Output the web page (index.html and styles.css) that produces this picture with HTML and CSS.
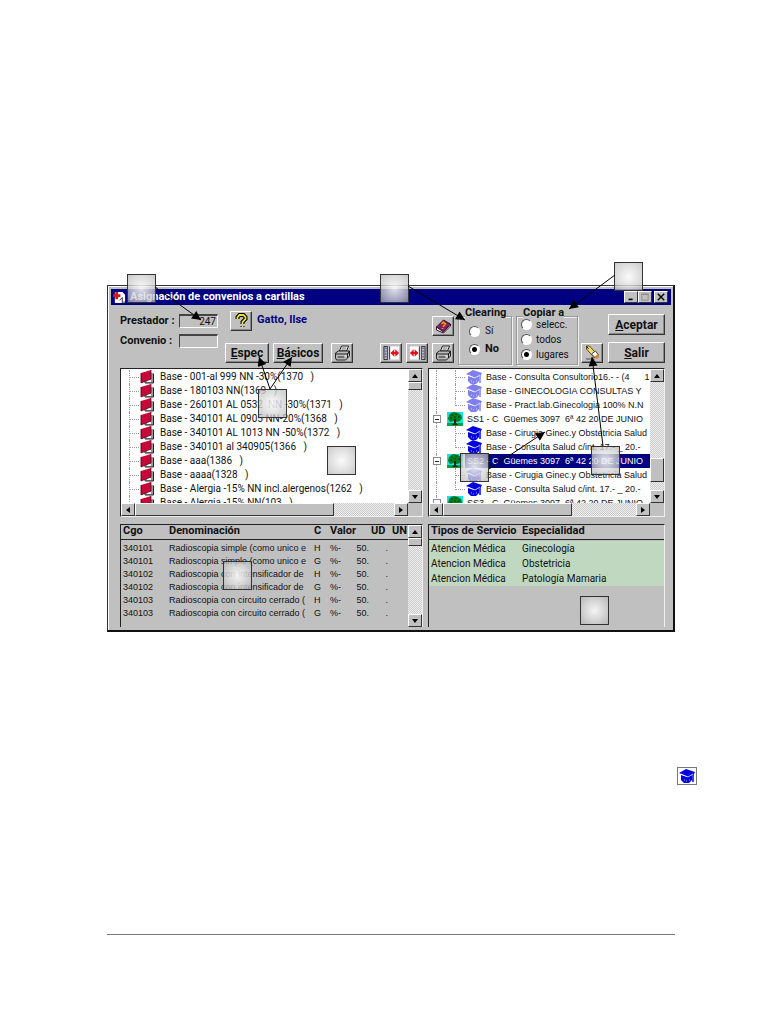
FILE: index.html
```html
<!DOCTYPE html>
<html lang="es">
<head>
<meta charset="utf-8">
<title>Asignación de convenios a cartillas</title>
<link rel="stylesheet" href="styles.css">
</head>
<body>
<svg class="defs" width="0" height="0" aria-hidden="true">
  <symbol id="book" viewBox="0 0 16 14">
    <path d="M5 3h10v10H5z" fill="#999"/><path d="M8 10h4v2H8z" fill="#fff"/><path d="M14.500 4v9H6" fill="none" stroke="#222"/>
    <path d="M2 3L12 0v9L2 13z" fill="#c80838"/><path d="M12 0v9L2 13" fill="none" stroke="#500018" stroke-width=".7"/><path d="M1 4h2M1 6h2M1 8h2M1 10h2M1 12h2" stroke="#300010" stroke-width=".8"/>
  </symbol>
  <symbol id="cap" viewBox="0 0 16 14">
    <path d="M0 4L7 0l9 3-1 2-6 3z"/><path d="M2 6l6 2 5-2v5l-3 3H5l-3-3z"/><path d="M14 4v9" stroke="currentColor" stroke-width="1.5"/><path d="M2 5l7 3 5-3M5 11h1M7 12h1M10 11h1" stroke="#fff" stroke-width=".7" fill="none"/>
  </symbol>
  <symbol id="tree" viewBox="0 0 16 14">
    <path d="M0 0h16v14H0z" fill="#18e0e8"/><path d="M0 11h16v3H0z" fill="#00a040"/>
    <path d="M2 3l2-2 3-1 4 1 3 2 1 3-2 3-3 1-3-1-4 1-2-3z" fill="#008020"/><path d="M4 3h2M8 2h2M11 5h2M3 6h2M7 5h2" stroke="#003c10"/>
    <path d="M7 7h2v4l2 2H5l2-2z" fill="#402000"/>
  </symbol>
  <symbol id="printer" viewBox="0 0 16 16">
    <path d="M5 6l2-5h7l-2 5z" fill="#fff" stroke="#222"/><path d="M7 3h5M7 5h4" stroke="#666"/>
    <path d="M1 8l3-2h11l-2 3v4l-2 2H2l-1-2z" fill="#bbb" stroke="#222"/><path d="M1 9h12l2-3v5l-2 2M3 12h7" fill="none" stroke="#222"/><path d="M10 11h2" stroke="#fff"/>
  </symbol>
  <symbol id="panel" viewBox="0 0 18 16">
    <path d="M1 1h16v14H1z" fill="#fff"/><path d="M1 1h4v14H1z" fill="#b8b8c8"/><path d="M1 1h4v14H1zM7 1v14" fill="none" stroke="#222"/><path d="M2 3h2M2 6h2M2 9h2M2 12h2" stroke="#3850a0"/>
    <path d="M8 8l4-4v8zM17 8l-4-4v8z" fill="#e01020"/><path d="M9 8h7" stroke="#e01020" stroke-width="2"/>
  </symbol>
  <symbol id="up" viewBox="0 0 8 8"><path d="M1 6l3-4 3 4z"/></symbol>
  <symbol id="down" viewBox="0 0 8 8"><path d="M1 2l3 4 3-4z"/></symbol>
  <symbol id="left" viewBox="0 0 8 8"><path d="M6 1L2 4l4 3z"/></symbol>
  <symbol id="right" viewBox="0 0 8 8"><path d="M2 1l4 3-4 3z"/></symbol>
</svg>

<main class="page">
<section class="window">
  <header class="titlebar">
    <svg class="appicon" viewBox="0 0 14 14"><path d="M2 1h8l3 3v9H2z" fill="#fff"/><path d="M4 1v8M0 5h8" stroke="#e01010" stroke-width="3"/><path d="M7 10l3-3v6M11 12h2" stroke="#222" fill="none"/></svg>
    <h1>Asignación de convenios a cartillas</h1>
    <button class="sys" aria-label="Minimizar"><svg viewBox="0 0 10 10"><path d="M2 8h5" stroke="#000" stroke-width="2"/></svg></button>
    <button class="sys" aria-label="Maximizar" disabled><svg viewBox="0 0 10 10"><path d="M1 1h8v8H1zM1 2h8" stroke="#888" fill="none"/></svg></button>
    <button class="sys close" aria-label="Cerrar"><svg viewBox="0 0 10 10"><path d="M1 1l8 8M9 1L1 9" stroke="#000" stroke-width="1.800"/></svg></button>
  </header>

  <div class="toolbar">
    <div class="fields">
      <label for="prestador">Prestador :</label><input id="prestador" value="247">
      <label for="convenio">Convenio :</label><input id="convenio" value="">
    </div>
    <div class="tools">
      <div class="toolrow first">
        <button class="btn icon" aria-label="Ayuda"><svg viewBox="0 0 16 16"><path d="M4 6V4l2-2h4l2 2v2L9 9v2M9 13v1" fill="none" stroke="#000" stroke-width="4"/><path d="M4 6V4l2-2h4l2 2v2L9 9v2M9 13v1" fill="none" stroke="#e8e030" stroke-width="1.800"/></svg></button>
        <span class="name">Gatto, Ilse</span>
        <button class="btn icon manual" aria-label="Manual"><svg viewBox="0 0 16 16"><path d="M1 9l7-7 7 4-7 8z" fill="#802060" stroke="#301030"/><path d="M1 9v3l7 3 7-7V6l-7 8z" fill="#fff" stroke="#301030"/><path d="M6 6l2-2 2 2-2 2v1M7 10v1" fill="none" stroke="#ff9800" stroke-width="1.500"/></svg></button>
      </div>
      <div class="toolrow">
        <button class="btn espec"><span><u>E</u>spec</span></button>
        <button class="btn basicos"><span><u>B</u>ásicos</span></button>
        <button class="btn icon print" aria-label="Imprimir convenios"><svg viewBox="0 0 16 16"><use href="#printer"/></svg></button>
        <span class="grow"></span>
        <button class="btn icon" aria-label="Panel izquierdo"><svg viewBox="0 0 18 16"><use href="#panel"/></svg></button>
        <button class="btn icon" aria-label="Panel derecho"><svg class="flip" viewBox="0 0 18 16"><use href="#panel"/></svg></button>
        <button class="btn icon" aria-label="Imprimir cartilla"><svg viewBox="0 0 16 16"><use href="#printer"/></svg></button>
      </div>
    </div>
    <fieldset class="group clearing">
      <legend>Clearing</legend>
      <label><input type="radio" name="clearing">Sí</label>
      <label class="strong"><input type="radio" name="clearing" checked>No</label>
    </fieldset>
    <fieldset class="group copiar">
      <legend>Copiar a</legend>
      <label><input type="radio" name="copiar">selecc.</label>
      <label><input type="radio" name="copiar">todos</label>
      <label><input type="radio" name="copiar" checked>lugares</label>
    </fieldset>
    <button class="btn icon edit" aria-label="Editar"><svg viewBox="0 0 16 16"><path d="M1 13h9v2H2z" fill="#888"/><path d="M2 1l3 0 8 9-3 3-8-9z" fill="#f0e070" stroke="#604810"/><path d="M7 9l4-3 3 4-3 3z" fill="#fff" stroke="#444"/><path d="M10 12l3-3 2 3-3 2z" fill="#e08030"/><path d="M2 1l2 3" stroke="#222"/></svg></button>
    <div class="actions">
      <button class="btn"><span><u>A</u>ceptar</span></button>
      <button class="btn"><span><u>S</u>alir</span></button>
    </div>
  </div>

  <div class="panes">
    <div class="pane">
      <div class="paneview">
        <ul class="tree flat">
          <li><svg class="ico"><use href="#book"/></svg>Base - 001-al 999 NN -30%(1370 &nbsp; )</li>
          <li><svg class="ico"><use href="#book"/></svg>Base - 180103 NN(1369 &nbsp; )</li>
          <li><svg class="ico"><use href="#book"/></svg>Base - 260101 AL 0532 &nbsp;NN -30%(1371 &nbsp; )</li>
          <li><svg class="ico"><use href="#book"/></svg>Base - 340101 AL 0905 NN-20%(1368 &nbsp; )</li>
          <li><svg class="ico"><use href="#book"/></svg>Base - 340101 AL 1013 NN -50%(1372 &nbsp; )</li>
          <li><svg class="ico"><use href="#book"/></svg>Base - 340101 al 340905(1366 &nbsp; )</li>
          <li><svg class="ico"><use href="#book"/></svg>Base - aaa(1386 &nbsp; )</li>
          <li><svg class="ico"><use href="#book"/></svg>Base - aaaa(1328 &nbsp; )</li>
          <li><svg class="ico"><use href="#book"/></svg>Base - Alergia -15% NN incl.alergenos(1262 &nbsp; )</li>
          <li><svg class="ico"><use href="#book"/></svg>Base - Alergia -15% NN(103 &nbsp; )</li>
        </ul>
        <div class="vscroll"><button class="arrow" aria-label="Subir"><svg><use href="#up"/></svg></button><span class="thumb small"></span><span class="grow"></span><button class="arrow" aria-label="Bajar"><svg><use href="#down"/></svg></button></div>
      </div>
      <div class="hscroll"><button class="arrow" aria-label="Izquierda"><svg><use href="#left"/></svg></button><span class="thumb wide"></span><span class="grow"></span><button class="arrow" aria-label="Derecha"><svg><use href="#right"/></svg></button><span class="corner"></span></div>
    </div>

    <div class="pane">
      <div class="paneview">
        <ul class="tree nested">
          <li class="child"><svg class="ico cap dim"><use href="#cap"/></svg>Base - Consulta Consultorio16.- - (4 &nbsp; &nbsp; &nbsp;1</li>
          <li class="child"><svg class="ico cap dim"><use href="#cap"/></svg>Base - GINECOLOGIA CONSULTAS Y</li>
          <li class="child last"><svg class="ico cap dim"><use href="#cap"/></svg>Base - Pract.lab.Ginecologia 100% N.N</li>
          <li class="node"><span class="toggle"></span><svg class="ico"><use href="#tree"/></svg><span class="label">SS1 - C &nbsp;Güemes 3097 &nbsp;6ª 42 20 DE JUNIO</span></li>
          <li class="child"><svg class="ico cap"><use href="#cap"/></svg>Base - Cirugia Ginec.y Obstetricia Salud</li>
          <li class="child last"><svg class="ico cap"><use href="#cap"/></svg>Base - Consulta Salud c/int. 17.- _ 20.-</li>
          <li class="node"><span class="toggle"></span><svg class="ico"><use href="#tree"/></svg><span class="label selected">SS2 - C &nbsp;Güemes 3097 &nbsp;6ª 42 20 DE JUNIO</span></li>
          <li class="child"><svg class="ico cap"><use href="#cap"/></svg>Base - Cirugia Ginec.y Obstetricia Salud</li>
          <li class="child last"><svg class="ico cap"><use href="#cap"/></svg>Base - Consulta Salud c/int. 17.- _ 20.-</li>
          <li class="node"><span class="toggle"></span><svg class="ico"><use href="#tree"/></svg><span class="label">SS3 - C &nbsp;Güemes 3097 &nbsp;6ª 42 20 DE JUNIO</span></li>
        </ul>
        <div class="vscroll"><button class="arrow" aria-label="Subir"><svg><use href="#up"/></svg></button><span class="grow"></span><span class="thumb tall"></span><span class="gap"></span><button class="arrow" aria-label="Bajar"><svg><use href="#down"/></svg></button></div>
      </div>
      <div class="hscroll"><button class="arrow" aria-label="Izquierda"><svg><use href="#left"/></svg></button><span class="thumb mid"></span><span class="grow"></span><button class="arrow" aria-label="Derecha"><svg><use href="#right"/></svg></button><span class="corner"></span></div>
    </div>

    <div class="grid">
      <table class="codes">
        <colgroup><col class="c1"><col class="c2"><col class="c3"><col class="c4"><col class="c5"><col class="c6"></colgroup>
        <thead><tr><th>Cgo</th><th>Denominación</th><th>C</th><th>Valor</th><th>UD</th><th>UN</th></tr></thead>
        <tbody>
          <tr><td>340101</td><td>Radioscopia simple (como unico e</td><td>H</td><td><span class="val"><span>%-</span><span>50.</span></span></td><td class="dot">.</td><td></td></tr>
          <tr><td>340101</td><td>Radioscopia simple (como unico e</td><td>G</td><td><span class="val"><span>%-</span><span>50.</span></span></td><td class="dot">.</td><td></td></tr>
          <tr><td>340102</td><td>Radioscopia con intensificador de</td><td>H</td><td><span class="val"><span>%-</span><span>50.</span></span></td><td class="dot">.</td><td></td></tr>
          <tr><td>340102</td><td>Radioscopia con intensificador de</td><td>G</td><td><span class="val"><span>%-</span><span>50.</span></span></td><td class="dot">.</td><td></td></tr>
          <tr><td>340103</td><td>Radioscopia con circuito cerrado (</td><td>H</td><td><span class="val"><span>%-</span><span>50.</span></span></td><td class="dot">.</td><td></td></tr>
          <tr><td>340103</td><td>Radioscopia con circuito cerrado (</td><td>G</td><td><span class="val"><span>%-</span><span>50.</span></span></td><td class="dot">.</td><td></td></tr>
        </tbody>
      </table>
      <div class="vscroll"><button class="arrow" aria-label="Subir"><svg><use href="#up"/></svg></button><span class="thumb small"></span><span class="grow"></span><button class="arrow" aria-label="Bajar"><svg><use href="#down"/></svg></button></div>
    </div>

    <div class="grid">
      <table class="services">
        <colgroup><col class="s1"><col></colgroup>
        <thead><tr><th>Tipos de Servicio</th><th>Especialidad</th></tr></thead>
        <tbody>
          <tr><td>Atencion Médica</td><td>Ginecología</td></tr>
          <tr><td>Atencion Médica</td><td>Obstetricia</td></tr>
          <tr><td>Atencion Médica</td><td>Patología Mamaria</td></tr>
        </tbody>
      </table>
    </div>
  </div>

  <span class="callout k1"></span><span class="callout k2"></span><span class="callout k3"></span>
  <span class="callout k4"></span><span class="callout k5"></span><span class="callout k6"></span>
  <span class="callout k7"></span><span class="callout k8"></span><span class="callout k9"></span>
  <svg class="arrows" viewBox="100 260 580 380" aria-hidden="true">
    <defs><marker id="head" viewBox="0 0 10 10" refX="10" refY="5" markerWidth="10" markerHeight="9" markerUnits="userSpaceOnUse" orient="auto"><path d="M0 0l10 5-10 5z"/></marker></defs>
    <g stroke="#000" fill="none">
      <path d="M155 287L201 320" marker-end="url(#head)"/>
      <path d="M408 286L465 320" marker-end="url(#head)"/>
      <path d="M615 275L569 309" marker-end="url(#head)"/>
      <path d="M270 389L259 357" marker-end="url(#head)"/>
      <path d="M270 389L292 357" marker-end="url(#head)"/>
      <path d="M603 446L592 357" marker-end="url(#head)"/>
      <path d="M489 469L545 432" marker-end="url(#head)"/>
    </g>
  </svg>
</section>

<div class="figure"><span class="capbox"><svg class="ico cap"><use href="#cap"/></svg></span></div>
<hr class="rule">
</main>
</body>
</html>
```
FILE: styles.css
```css
* { box-sizing: border-box; }
body { margin: 0; background: #fff; color: #111; font: 10px/14px Roboto, Arial, sans-serif; }
button, input { font: inherit; color: inherit; margin: 0; padding: 0; }
.defs { position: absolute; }
.page { padding: 285px 107px 0; }
.grow { flex: 1; }

.window { position: relative; padding: 3px 2px 3px 3px; background: #c0c0c0; border: 1px solid #333; border-right: 2px solid #111; border-bottom: 2px solid #111; box-shadow: inset 1px 1px #fff; }
.titlebar { display: flex; align-items: center; height: 16px; padding: 0 3px 0 2px; background: #000080; color: #fff; }
.titlebar h1 { flex: 1; margin: 0 0 0 4px; font: bold 11px/14px Roboto, sans-serif; }
.appicon { width: 13px; height: 13px; }
.sys { display: grid; place-items: center; width: 14px; height: 12px; background: #c0c0c0; border: 1px solid; border-color: #fff #333 #333 #fff; }
.sys svg { width: 8px; height: 8px; }
.close { margin-left: 2px; }

.toolbar { display: flex; align-items: flex-start; height: 63px; padding: 2px 6px 0 9px; }
.fields { display: grid; grid-template-columns: 59px 39px; grid-auto-rows: 14px; row-gap: 6px; padding-top: 7px; }
.fields label { font: bold 11px/14px Roboto, sans-serif; }
.fields input { width: 39px; height: 14px; padding-right: 1px; background: #c0c0c0; border: 1px solid; border-color: #444 #fff #fff #444; border-top-width: 2px; text-align: right; }
.tools { flex: 1; padding-left: 7px; }
.toolrow { display: flex; gap: 4px; height: 20px; }
.first { height: 25px; margin: 4px 0 7px; padding-left: 5px; }
.btn { display: grid; place-content: center; place-items: center; height: 20px; background: #c0c0c0; border: 1px solid; border-color: #fff #333 #333 #fff; box-shadow: inset -1px -1px #888; font: bold 12px/14px Roboto, sans-serif; }
.icon { width: 22px; }
.icon svg { width: 17px; height: 16px; }
.flip { transform: scaleX(-1); }
.name { flex: 1; margin-left: 1px; color: #000080; font: bold 11px/18px Roboto, sans-serif; }
.manual { align-self: flex-end; }
.espec { width: 44px; }
.basicos { width: 50px; }
.print { margin-left: 4px; }

.group { position: relative; margin: 9px 0 0 4px; height: 49px; min-width: 0; padding: 0; border: 1px solid #999; box-shadow: 1px 1px #eee, inset 1px 1px #eee; }
.group legend { position: absolute; top: -10px; left: 6px; padding: 0; background: #c0c0c0; font: bold 11px/12px Roboto, sans-serif; }
.clearing { width: 54px; padding-top: 5px; }
.clearing label { display: flex; align-items: center; gap: 5px; height: 18px; padding-left: 10px; }
.copiar { width: 62px; }
.copiar label { display: flex; align-items: center; gap: 4px; height: 15px; padding-left: 4px; }
.group .strong { font: bold 11px/14px Roboto, sans-serif; }
.group input { appearance: none; flex: none; width: 11px; height: 11px; border: 1px solid; border-color: #555 #fff #fff #555; border-radius: 50%; background: #fff; }
.group input:checked { background: radial-gradient(#000 0 2px, #fff 3px); }
.edit { margin: 36px 0 0 3px; }
.actions { display: flex; flex-direction: column; gap: 7px; width: 57px; margin: 7px 0 0 5px; }
.actions .btn { height: 21px; }

.panes { display: grid; grid-template-columns: minmax(0, 303fr) minmax(0, 237fr); column-gap: 5px; row-gap: 7px; padding: 0 6px 0 9px; }
.pane, .grid { border: 1px solid; border-color: #222 #eee #eee #222; }
.pane { background: #fff; }
.paneview { display: flex; height: 134px; }
.tree { flex: 1; min-width: 0; margin: 0; padding: 1px 0 0; list-style: none; overflow: hidden; white-space: nowrap; }
.tree li { position: relative; display: flex; align-items: center; height: 14px; }
.ico { flex: none; width: 16px; height: 14px; }
.cap { fill: #0000e0; color: #0000e0; }
.dim { opacity: .5; }
.flat li { gap: 5px; padding-left: 18px; }
.flat li::before, .child::before { content: ""; position: absolute; left: 8px; top: 0; width: 10px; height: 14px; border-left: 1px dotted #999; background: repeating-linear-gradient(90deg, #999 0 1px, transparent 1px 2px) 0 7px / 10px 1px no-repeat; }
.nested { font: 9px/14px "Liberation Sans", Arial, sans-serif; }
.nested li::after { content: ""; position: absolute; left: 7px; top: 0; height: 14px; border-left: 1px dotted #999; }
.child { gap: 4px; padding-left: 37px; }
.nested .child::before { left: 26px; }
.nested .last::before { height: 8px; }
.node { padding-left: 4px; }
.toggle { position: relative; z-index: 1; flex: none; width: 8px; height: 8px; margin-right: 6px; border: 1px solid #888; background: linear-gradient(#222, #222) center / 4px 1px no-repeat #fff; }
.label { flex: 1; margin-left: 2px; padding-left: 2px; }
.selected { background: #000080; color: #fff; }

.vscroll, .hscroll { display: flex; background: repeating-conic-gradient(#eee 0 25%, #ccc 0 50%) 0 0 / 2px 2px; }
.vscroll { flex: none; flex-direction: column; width: 14px; }
.hscroll { height: 13px; }
.arrow { display: grid; place-items: center; flex: none; width: 14px; height: 13px; background: #c0c0c0; border: 1px solid; border-color: #fff #333 #333 #fff; }
.arrow svg { width: 8px; height: 8px; }
.thumb { flex: none; background: #c0c0c0; border: 1px solid; border-color: #fff #333 #333 #fff; }
.small { height: 8px; }
.tall { height: 24px; }
.gap { height: 8px; }
.wide { width: 66%; }
.mid { width: 55%; }
.corner { width: 14px; background: #c0c0c0; }

.grid { display: flex; align-items: stretch; min-height: 103px; border-bottom: 0; }
.grid table { flex: 1; align-self: flex-start; min-width: 0; width: 100%; table-layout: fixed; border-collapse: collapse; white-space: nowrap; }
.grid th { padding: 0 0 2px 2px; border-bottom: 1px solid #222; text-align: left; font: bold 11px/12px Roboto, sans-serif; }
.grid td { padding: 0 0 0 2px; line-height: 13px; }
.codes td { font: 9px/13px "Liberation Sans", Arial, sans-serif; }
.codes tbody::before { content: ""; display: block; height: 2px; }
.c1 { width: 46px; } .c2 { width: 145px; } .c3 { width: 16px; } .c4 { width: 41px; } .c5 { width: 21px; }
.val { display: flex; justify-content: space-between; }
.grid .dot { text-align: right; padding-right: 2px; }
.s1 { width: 91px; }
.services tbody { background: #c0d8c0; }
.grid .services td { line-height: 15px; }
.services tbody::before { content: ""; display: block; height: 1px; }

.callout { position: absolute; width: 29px; height: 29px; border: 1px solid #333; background: radial-gradient(rgba(250, 250, 250, .9), rgba(180, 180, 180, .7)); }
.k1 { left: 19px; top: -12px; }
.k2 { left: 272px; top: -12px; }
.k3 { left: 506px; top: -24px; }
.k4 { left: 150px; top: 103px; }
.k5 { left: 219px; top: 160px; }
.k6 { left: 352px; top: 167px; }
.k7 { left: 483px; top: 160px; }
.k8 { left: 115px; top: 275px; }
.k9 { left: 472px; top: 310px; }
.arrows { position: absolute; left: -8px; top: -26px; width: 580px; height: 380px; pointer-events: none; }

.figure { display: flex; justify-content: flex-end; margin: 135px -22px 0 0; }
.capbox { display: grid; place-items: center; width: 20px; height: 18px; border: 1px solid #777; }
.rule { margin: 149px 0 0; border: 0; border-top: 1px solid #777; }
```
